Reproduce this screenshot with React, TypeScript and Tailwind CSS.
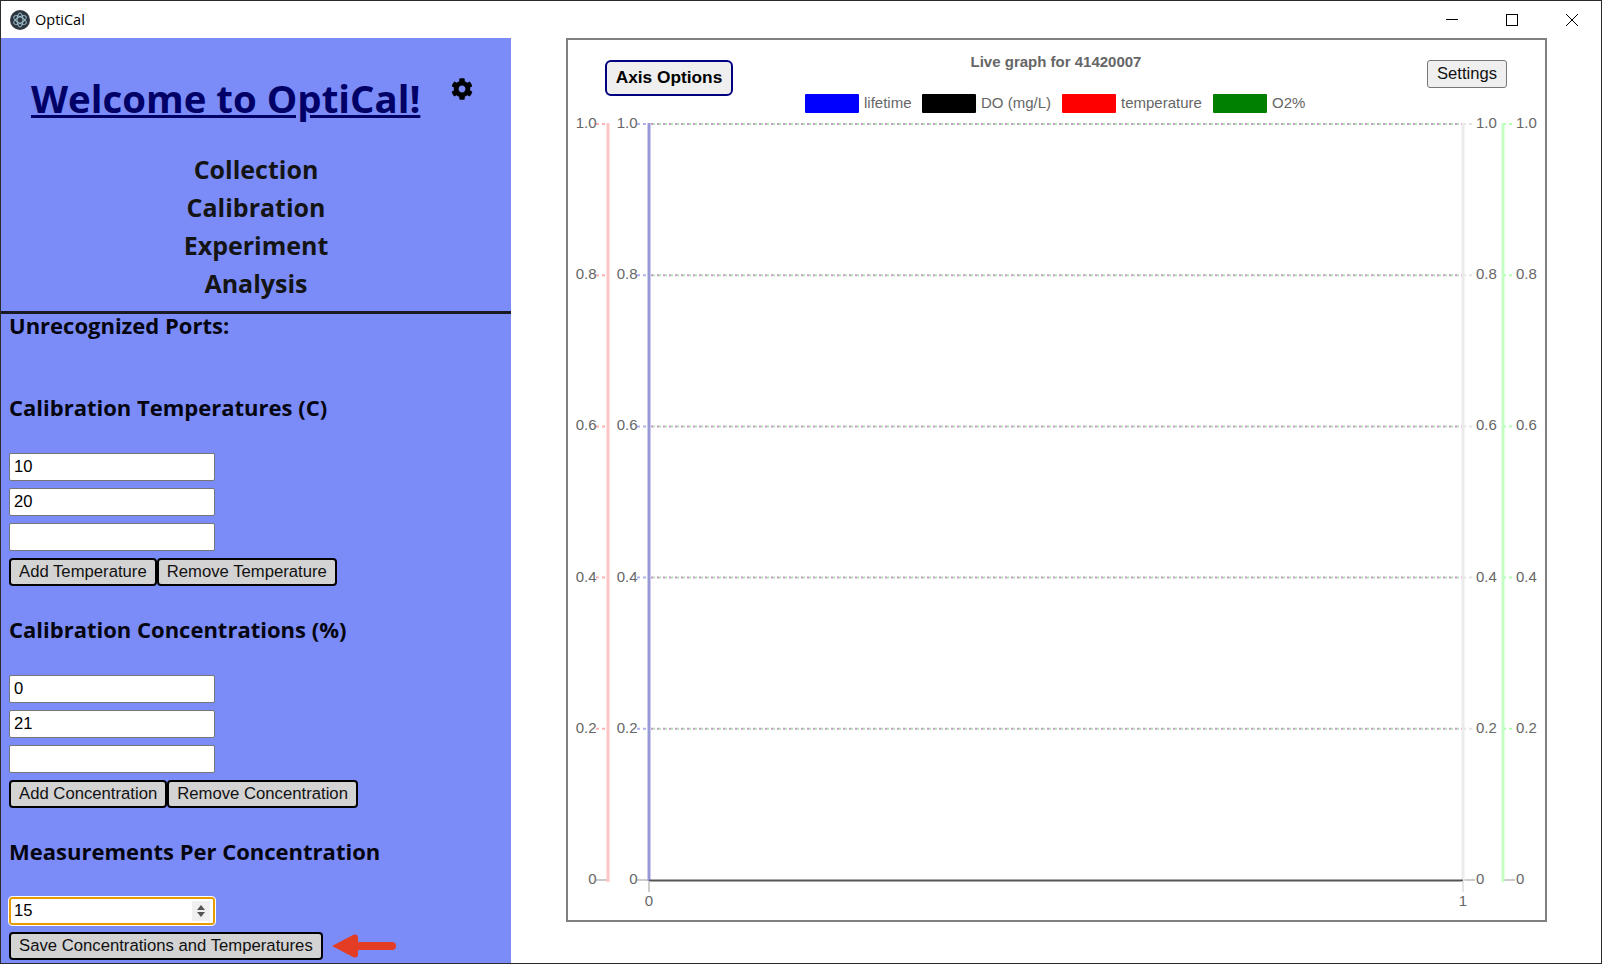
import { FaCog } from "react-icons/fa";

const heading = "font-['Open_Sans',sans-serif] font-bold text-[22px] leading-[30px] text-[#050510]";
const fieldCls =
  "block w-[206px] h-[28px] mb-[7px] bg-white border border-[#767676] rounded-[2px] px-[4px] text-[16.6px] text-black font-['Liberation_Sans',sans-serif]";
const btnCls =
  "h-[28px] px-[8px] bg-[#d3d3d3] border-2 border-black rounded-[4px] text-[16.7px] leading-[22px] text-[#111] font-['Liberation_Sans',sans-serif] whitespace-nowrap";

const gridY = [124, 275.2, 426.4, 577.6, 728.8, 880];
const labels = ["1.0", "0.8", "0.6", "0.4", "0.2", "0"];

const legend = [
  { x: 805, color: "#0000ff", label: "lifetime" },
  { x: 922, color: "#000000", label: "DO (mg/L)" },
  { x: 1062, color: "#ff0000", label: "temperature" },
  { x: 1213, color: "#008000", label: "O2%" },
];

const ticks = [
  { x1: 596, x2: 608, stroke: "#ffb0b0" },
  { x1: 637, x2: 649, stroke: "#b0b0f0" },
  { x1: 1463, x2: 1475, stroke: "#e4e4e4" },
  { x1: 1503, x2: 1515, stroke: "#b0ffb0" },
];

const Chart = () => (
  <svg width="981" height="884" viewBox="566 38 981 884" className="block font-['Liberation_Sans',sans-serif]">
    <text x="1056" y="67" textAnchor="middle" fontSize="15" fontWeight="bold" fill="#666">
      Live graph for 41420007
    </text>
    {legend.map((l) => (
      <g key={l.label}>
        <rect x={l.x} y="94" width="54" height="19" rx="1" fill={l.color} />
        <text x={l.x + 59} y="108" fontSize="15" fill="#666">
          {l.label}
        </text>
      </g>
    ))}
    {gridY.map((y, i) => (
      <g key={y}>
        {i < 5 && (
          <>
            <line x1="651" x2="1463" y1={y} y2={y} stroke="#c79ac7" strokeWidth="2" strokeDasharray="2 4" />
            <line x1="653" x2="1463" y1={y} y2={y} stroke="#b4e4b4" strokeWidth="2" strokeDasharray="2 4" />
          </>
        )}
        {ticks.map((t) => (
          <line
            key={t.x1}
            x1={t.x1}
            x2={t.x2}
            y1={y}
            y2={y}
            stroke={i < 5 ? t.stroke : "#cccccc"}
            strokeWidth="2"
            strokeDasharray={i < 5 ? "3 3" : undefined}
          />
        ))}
        <text x="596.5" y={y + 4} textAnchor="end" fontSize="15" fill="#666">{labels[i]}</text>
        <text x="637.5" y={y + 4} textAnchor="end" fontSize="15" fill="#666">{labels[i]}</text>
        <text x="1476" y={y + 4} fontSize="15" fill="#666">{labels[i]}</text>
        <text x="1516" y={y + 4} fontSize="15" fill="#666">{labels[i]}</text>
      </g>
    ))}
    <line x1="608" x2="608" y1="123" y2="882" stroke="#ffc4c4" strokeWidth="3" />
    <line x1="649" x2="649" y1="123" y2="881" stroke="#9999d9" strokeWidth="3" />
    <line x1="1463" x2="1463" y1="123" y2="881" stroke="#ebebeb" strokeWidth="3" />
    <line x1="1503" x2="1503" y1="123" y2="882" stroke="#c4ffc4" strokeWidth="3" />
    <line x1="649" x2="1463" y1="880.5" y2="880.5" stroke="#555" strokeWidth="2" />
    <line x1="649" x2="649" y1="881" y2="892" stroke="#ccc" strokeWidth="2" />
    <line x1="1463" x2="1463" y1="881" y2="892" stroke="#e4e4e4" strokeWidth="2" />
    <text x="649" y="906" textAnchor="middle" fontSize="15" fill="#666">0</text>
    <text x="1463" y="906" textAnchor="middle" fontSize="15" fill="#666">1</text>
  </svg>
);

const App = () => {
  return (
    <div className="w-[1602px] h-[964px] overflow-hidden flex flex-col bg-white border border-[#2b2b2b]">
      <div className="h-[37px] shrink-0 flex items-center pl-[9px]">
        <svg width="20" height="20" viewBox="0 0 20 20">
          <circle cx="10" cy="10" r="10" fill="#2f3640" />
          <g fill="none" stroke="#9fc4d0" strokeWidth="1">
            <ellipse cx="10" cy="10" rx="7" ry="3" transform="rotate(30 10 10)" />
            <ellipse cx="10" cy="10" rx="7" ry="3" transform="rotate(90 10 10)" />
            <ellipse cx="10" cy="10" rx="7" ry="3" transform="rotate(150 10 10)" />
          </g>
        </svg>
        <span className="ml-[5px] text-[14.5px] text-black font-['Open_Sans',sans-serif]">OptiCal</span>
        <div className="ml-auto flex items-center text-black">
          <svg width="14" height="14" viewBox="0 0 14 14" className="mr-[46px]">
            <line x1="1" x2="13" y1="6.5" y2="6.5" stroke="#000" />
          </svg>
          <svg width="14" height="14" viewBox="0 0 14 14" className="mr-[46px]">
            <rect x="1.5" y="1.5" width="11" height="11" fill="none" stroke="#000" />
          </svg>
          <svg width="14" height="14" viewBox="0 0 14 14" className="mr-[22px]">
            <path d="M1 1 L13 13 M13 1 L1 13" stroke="#000" fill="none" />
          </svg>
        </div>
      </div>

      <div className="flex flex-1 min-h-0">
        <div className="w-[510px] shrink-0 bg-[#7b8cf8]">
          <div className="relative h-[273px] border-b-[3px] border-[#1a1a24] box-content">
            <h1 className="pt-[29px] pl-[30px] font-['Open_Sans',sans-serif] font-bold text-[38.4px] leading-[62px] text-[#000066] underline">
              Welcome to OptiCal!
            </h1>
            <FaCog className="absolute left-[450px] top-[40px] text-[22px] text-black" />
            <nav className="mt-[21px] flex flex-col items-center font-['Open_Sans',sans-serif] font-bold text-[25px] leading-[38px] text-[#141414]">
              <span>Collection</span>
              <span>Calibration</span>
              <span>Experiment</span>
              <span>Analysis</span>
            </nav>
          </div>

          <div className="pl-[8px]">
            <h2 className={`${heading} -mt-[4px]`}>Unrecognized Ports:</h2>
            <h2 className={`${heading} mt-[52px] mb-[31px]`}>Calibration Temperatures (C)</h2>
            <input className={fieldCls} defaultValue="10" />
            <input className={fieldCls} defaultValue="20" />
            <input className={fieldCls} />
            <div className="flex">
              <button className={btnCls}>Add Temperature</button>
              <button className={btnCls}>Remove Temperature</button>
            </div>

            <h2 className={`${heading} mt-[28px] mb-[31px]`}>Calibration Concentrations (%)</h2>
            <input className={fieldCls} defaultValue="0" />
            <input className={fieldCls} defaultValue="21" />
            <input className={fieldCls} />
            <div className="flex">
              <button className={btnCls}>Add Concentration</button>
              <button className={btnCls}>Remove Concentration</button>
            </div>

            <h2 className={`${heading} mt-[28px] mb-[31px]`}>Measurements Per Concentration</h2>
            <div className="flex items-center w-[206px] h-[28px] mb-[7px] bg-white border-2 border-[#e89b00] rounded-[3px] outline outline-white pl-[3px] pr-[3px] text-[16.6px] text-black font-['Liberation_Sans',sans-serif]">
              <span>15</span>
              <span className="ml-auto flex flex-col items-center justify-center gap-[2px] w-[18px] h-[20px] bg-[#f0f0f0]">
                <span className="w-0 h-0 border-x-[4px] border-x-transparent border-b-[5px] border-b-[#555]" />
                <span className="w-0 h-0 border-x-[4px] border-x-transparent border-t-[5px] border-t-[#555]" />
              </span>
            </div>
            <div className="flex items-center">
              <button className={btnCls}>Save Concentrations and Temperatures</button>
              <svg width="66" height="28" viewBox="0 0 66 28" className="ml-[8px]">
                <path d="M1 14 L22 3 Q27 1 27 6 L27 10 L61 10 Q65 10 65 14 Q65 18 61 18 L27 18 L27 22 Q27 27 22 25 Z" fill="#e33d26" />
              </svg>
            </div>
          </div>
        </div>

        <div className="relative flex-1 pl-[55px]">
          <div className="relative w-[981px] h-[884px] border-2 border-[#808080] box-border overflow-hidden">
            <div className="-m-[2px]">
              <Chart />
            </div>
            <button className="absolute left-[37px] top-[20px] h-[36px] w-[128px] bg-[#efefef] border-2 border-[#000080] rounded-[6px] text-[17.3px] font-bold text-black font-['Liberation_Sans',sans-serif]">
              Axis Options
            </button>
            <button className="absolute left-[859px] top-[20px] h-[28px] w-[80px] bg-[#efefef] border border-[#767676] rounded-[3px] text-[16.6px] text-[#111] font-['Liberation_Sans',sans-serif]">
              Settings
            </button>
          </div>
        </div>
      </div>
    </div>
  );
};

export default App;
